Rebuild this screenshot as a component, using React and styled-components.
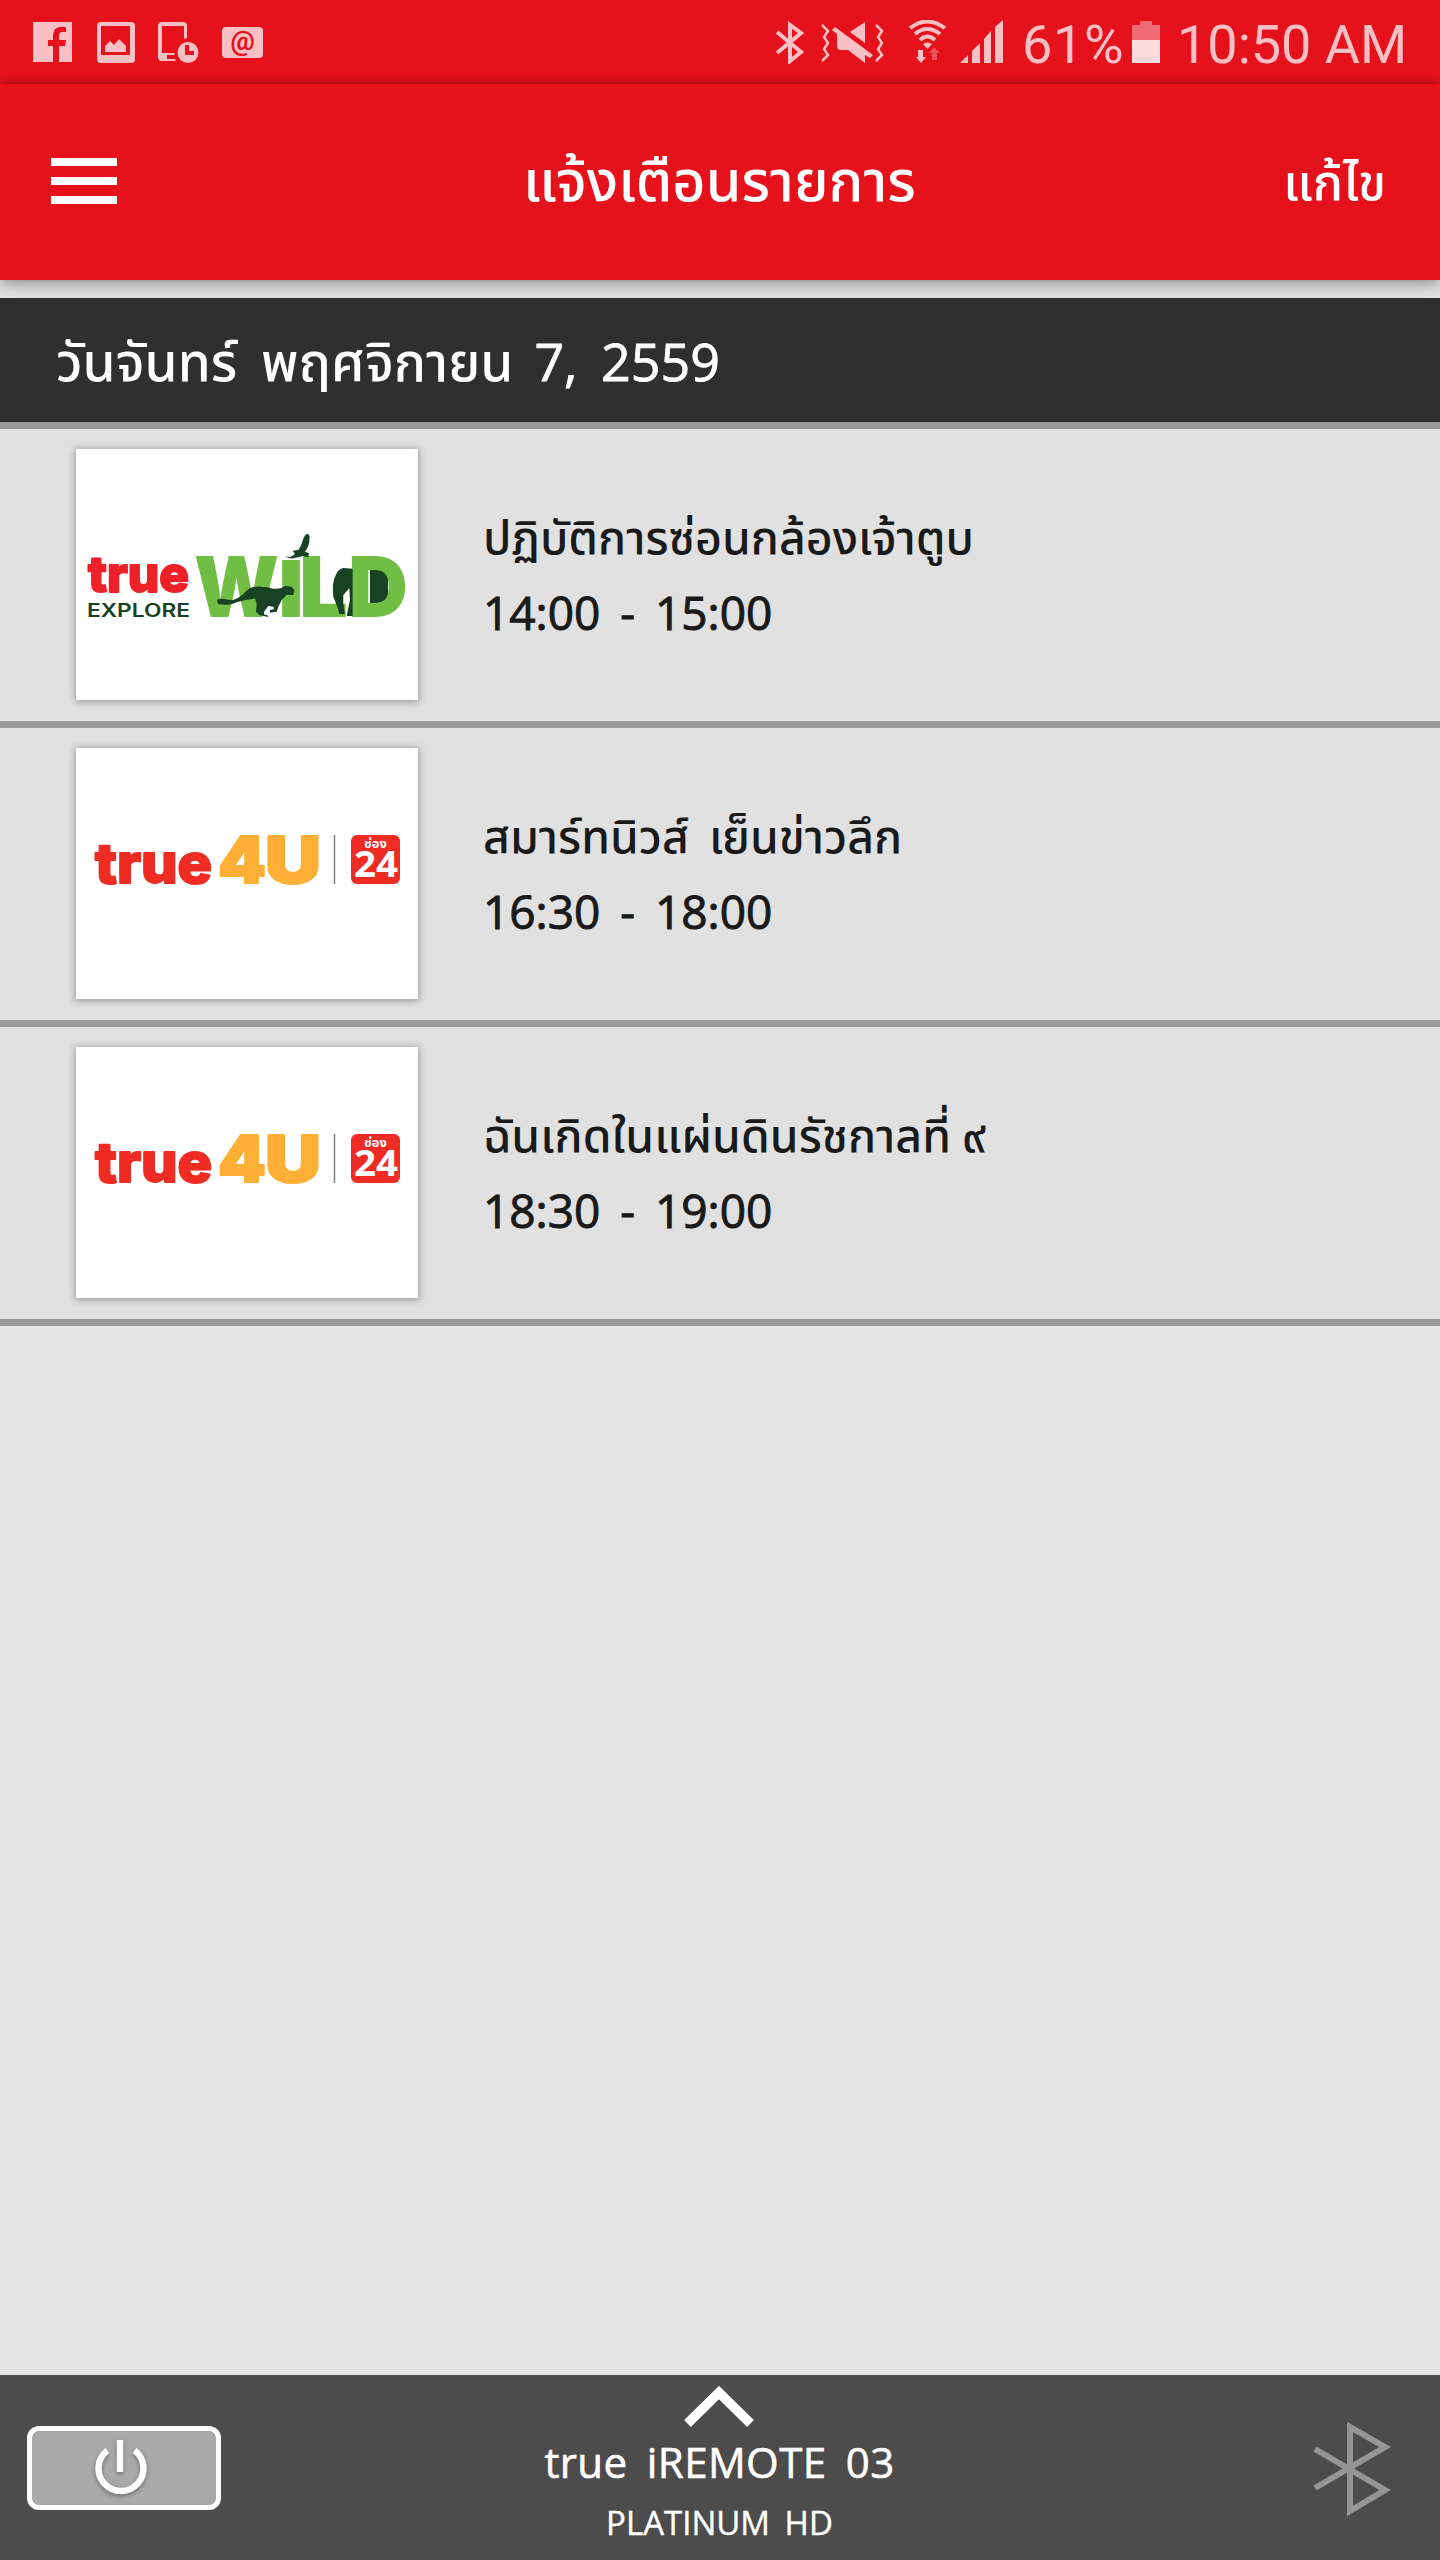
import React from 'react'
import styled, { createGlobalStyle } from 'styled-components'

const GlobalStyle = createGlobalStyle`
  * {
    box-sizing: border-box;
  }
  body {
    margin: 0;
    background-color: #e4e4e4;
    font-family: "Open Sans", "Noto Sans", "Noto Sans Thai", sans-serif;
  }
`

const Screen = styled.div`
  display: flex;
  flex-direction: column;
  width: 1440px;
  height: 2560px;
  overflow: hidden;
  background-color: #e4e4e4;
`

const StatusBar = styled.header`
  display: flex;
  justify-content: space-between;
  height: 84px;
  padding: 20px 37px 0 33px;
  background-color: #e5121c;
  color: #f8c0c4;
  font-family: Roboto, sans-serif;
`

const StatusGroup = styled.div`
  display: flex;
  align-items: flex-start;
  gap: ${props => props.gap || 0}px;
`

const StatusText = styled.span`
  width: ${props => props.width}px;
  margin-left: ${props => props.left}px;
  font-size: 54px;
  line-height: 49px;
  white-space: nowrap;
  letter-spacing: ${props => props.spacing || 0}px;
`

const Toolbar = styled.nav`
  position: relative;
  z-index: 1;
  display: grid;
  grid-template-columns: 1fr auto 1fr;
  align-items: center;
  flex: none;
  height: 196px;
  padding: 0 54px 0 51px;
  background-color: #e5121c;
  color: #fff;
  box-shadow: 0 0 12px rgba(0, 0, 0, .28), 0 6px 16px rgba(0, 0, 0, .2);
`

const MenuButton = styled.div`
  display: flex;
  flex-direction: column;
  gap: 11px;
  width: 66px;
  margin-bottom: 3px;
`

const MenuLine = styled.span`
  height: 8px;
  background-color: #fff;
`

const Title = styled.h1`
  margin: 0 0 6px 2px;
  font-size: 57.5px;
  font-weight: 500;
  line-height: 80px;
  white-space: nowrap;
`

const EditButton = styled.span`
  justify-self: end;
  margin-bottom: 2px;
  font-size: 50px;
  font-weight: 500;
  line-height: 80px;
  white-space: nowrap;
`

const DateBar = styled.div`
  flex: none;
  height: 131px;
  margin-top: 18px;
  padding: 0 56px;
  border-bottom: 7px solid #999;
  background-color: #2f2f2f;
  color: #fff;
  font-size: 53.3px;
  font-weight: 500;
  line-height: 126px;
  word-spacing: 10px;
  white-space: pre;
`

const DateDigits = styled.span`
  margin-left: -3px;
  font-size: 52px;
  -webkit-text-stroke: .8px currentColor;
`

const Row = styled.article`
  display: flex;
  flex: none;
  height: 299px;
  padding: 20px 0 0 76px;
  border-bottom: 7px solid #999;
  background-color: #e1e1e1;
`

const Thumb = styled.div`
  width: 342px;
  height: 251px;
  background-color: #fff;
  box-shadow: 0 1px 7px 1px rgba(0, 0, 0, .32);
`

const Info = styled.div`
  display: flex;
  flex-direction: column;
  padding: 49px 0 0 65px;
  color: #1a1a1a;
  font-weight: 500;
  white-space: nowrap;
`

const ShowTitle = styled.div`
  font-size: 46.4px;
  line-height: 76px;
  word-spacing: ${props => props.gap}px;
`

const ShowTime = styled.div`
  font-size: 46px;
  line-height: 76px;
  word-spacing: 8px;
  -webkit-text-stroke: 1px currentColor;
`

const Footer = styled.footer`
  display: grid;
  grid-template-columns: 1fr auto 1fr;
  height: 185px;
  margin-top: auto;
  padding: 0 28px 0 27px;
  background-color: #4c4c4c;
  color: #fff;
`

const PowerButton = styled.div`
  display: flex;
  justify-content: center;
  width: 194px;
  height: 84px;
  margin-top: 51px;
  padding-right: 6px;
  border: 5px solid #fff;
  border-radius: 12px;
  background-color: #a9a9a9;
`

const PowerIcon = styled.svg`
  filter: drop-shadow(0 2px 2px rgba(0, 0, 0, .35));
`

const Device = styled.div`
  display: flex;
  flex-direction: column;
  align-items: center;
  padding-top: 11px;
`

const DeviceName = styled.div`
  margin-top: 5px;
  font-size: 42px;
  line-height: 60px;
  letter-spacing: .4px;
  word-spacing: 8px;
  white-space: nowrap;
  -webkit-text-stroke: .6px currentColor;
`

const DeviceModel = styled.div`
  margin-top: 3px;
  font-size: 33px;
  line-height: 56px;
  word-spacing: 6px;
  white-space: nowrap;
  -webkit-text-stroke: .4px currentColor;
`

const LinkState = styled.div`
  justify-self: end;
  margin-right: 21px;
  padding-top: 46px;
`

const Notifications = () => (
  <StatusGroup gap={23}>
    <svg width="41" height="44" viewBox="0 0 41 44" fill="currentColor">
      <path d="M0 2h39v40H26V26h6l1-6h-7v-4q0-4 3-4h4V7h-5q-8 0-8 9v4h-5v6h5v16H0z" />
    </svg>
    <svg width="38" height="44" viewBox="0 0 38 44" fill="currentColor">
      <path fillRule="evenodd" d="M4 2h30q4 0 4 4v33q0 4-4 4H4q-4 0-4-4V6q0-4 4-4zM4 6v29h29V6z" />
      <path d="M8 26l5-5 4 4 5-6 7 7v6H8z" />
    </svg>
    <svg width="41" height="44" viewBox="0 0 41 44" fill="currentColor">
      <path d="M4 2h21q4 0 4 4v12l-3 1V6H4v27h13l-1 2h-7v4h8l1 2H4q-4 0-4-4V6q0-4 4-4z" />
      <path fillRule="evenodd" d="M30 22a10.500 10.500 0 1 1 0 21a10.500 10.500 0 0 1 0-21zM27 25v10h9v-4h-5v-6z" />
    </svg>
    <svg width="41" height="44" viewBox="0 0 41 44">
      <rect y="7" width="41" height="31" rx="4" fill="currentColor" />
      <text x="20.500" y="30" textAnchor="middle" fontSize="27" fontWeight="700" fill="#e5121c">@</text>
    </svg>
  </StatusGroup>
)

const SystemIcons = () => (
  <StatusGroup>
    <svg width="227" height="44" viewBox="777 20 227 44" fill="currentColor">
      <path d="M778 32l24 20-11 9V25l11 8-24 20" fill="none" stroke="currentColor" strokeWidth="4" />
      <path d="M823 25l6 6-4 6 4 6-4 6 4 6-6 6M877 25l6 6-4 6 4 6-4 6 4 6-6 6" fill="none" stroke="currentColor" strokeWidth="2.500" />
      <path d="M833 30l3-3 38 28-3 3-5-3v8l-17-13h-8q-3-1-3-4V34zM866 22v21l-15-11z" />
      <g fill="none" stroke="currentColor" strokeWidth="4">
        <path d="M911 28q17-13 35 0" />
        <path d="M916 34q12-10 25 0" />
        <path d="M921 40q7-7 15 0" />
      </g>
      <path d="M924 44q4-3 9 0l-4.500 5z" />
      <path d="M919 50h5v7h3l-5 6-5-6h2z" />
      <path d="M933 60v-7h-3l5-6 6 6h-3v7z" opacity=".35" />
      <path d="M961 63l8-8v8zM973 63V51l8-8v20zM985 63V39l7-8v32zM996 63V27l8-7v43z" />
    </svg>
    <StatusText left={19} width={110} spacing={.6}>61%</StatusText>
    <svg width="28" height="43" viewBox="0 0 28 43">
      <path d="M8 1h12v4h8v15H0V5h8z" fill="#f06d75" />
      <path d="M0 20h28v23H0z" fill="#fbdadc" />
    </svg>
    <StatusText left={17} width={226}>10:50 AM</StatusText>
  </StatusGroup>
)

const TrueWild = () => (
  <svg width="342" height="251" viewBox="0 0 342 251">
    <g fontFamily="Inter, sans-serif" fontWeight="800">
      <text x="12" y="143" fontSize="50" textLength="101" lengthAdjust="spacingAndGlyphs" fill="#ee2128" stroke="#ee2128" strokeWidth="2" strokeLinejoin="round">true</text>
      <text x="11" y="167.500" fontSize="18" fontWeight="600" textLength="103" lengthAdjust="spacingAndGlyphs" fill="#174224">EXPLORE</text>
    </g>
    <path d="M294 119h18v37h-18z" fill="#174224" />
    <g fontFamily="Inter, sans-serif" fontWeight="900" fontSize="84" fill="#70be44">
      <text x="118" y="168" textLength="85" lengthAdjust="spacingAndGlyphs">W</text>
      <text x="202" y="168" fontSize="79" textLength="26" lengthAdjust="spacingAndGlyphs">I</text>
      <text x="223" y="168" textLength="49" lengthAdjust="spacingAndGlyphs">L</text>
      <text x="272" y="168" textLength="60" lengthAdjust="spacingAndGlyphs">D</text>
    </g>
    {/* eagle, cheetah, elephant */}
    <g fill="#174224" transform="translate(-16 -19) scale(.3333)">
      <path d="M675 378l15 4 15-10-7-10 17-2q8-10 12-25 4-16 13-23 8-2 9 8 0 16-4 27-4 10-10 18l12 5-2 12-15-4-30 7q-14 2-25-7z" />
      <path d="M470 510q10-6 22-3 14 3 28 3 16-6 30-18 8-12 22-19 14-4 30-3 20 0 38 6 14 1 25-2l10-7 20 3 8 10-3 15-20-1-15 16q-4 10-10 20l-5 15-20 3v-8l12-2-2-8-15-2-13 17 0 8 13 4v4l-25-5-12-10 2-25-5-16q-14 5-25 4-16 3-30 8-16 8-30 7-16 0-25-2z" />
      <path d="M878 416l-28-2q-14 4-20 16-10 18-11 35-1 20 1 35l12 30 6 22 17 1-5-33v-25l18-20 2 35-10 48h18z" />
    </g>
  </svg>
)

const True4U = () => (
  <svg width="342" height="251" viewBox="0 0 342 251">
    <g fontFamily="Inter, sans-serif" fontWeight="800">
      <text x="19" y="135" fontSize="55" textLength="117" lengthAdjust="spacingAndGlyphs" fill="#ef2c24" stroke="#ef2c24" strokeWidth="2" strokeLinejoin="round">true</text>
      <g fontWeight="900" fontSize="65" fill="#fdb035" stroke="#fdb035" strokeWidth="2" strokeLinejoin="round">
        <text x="142" y="135" textLength="48" lengthAdjust="spacingAndGlyphs">4</text>
        <text x="189" y="135" textLength="56" lengthAdjust="spacingAndGlyphs">U</text>
      </g>
    </g>
    <path d="M258.500 87v49" stroke="#808080" strokeWidth="1.500" />
    <rect x="275" y="87" width="49" height="49" rx="6" fill="#ef2c24" />
    <text x="299.500" y="100" textAnchor="middle" fontSize="13" fontWeight="700" fill="#fff">ช่อง</text>
    <text x="278" y="129" fontFamily="Open Sans, sans-serif" fontSize="35" fontWeight="700" textLength="44" lengthAdjust="spacingAndGlyphs" fill="#fff">24</text>
  </svg>
)

const programs = [
  { title: 'ปฏิบัติการซ่อนกล้องเจ้าตูบ', time: '14:00 - 15:00', gap: 0, Logo: TrueWild },
  { title: 'สมาร์ทนิวส์ เย็นข่าวลึก', time: '16:30 - 18:00', gap: 8, Logo: True4U },
  { title: 'ฉันเกิดในแผ่นดินรัชกาลที่ ๙', time: '18:30 - 19:00', gap: -1, Logo: True4U },
]

const App = () => (
  <Screen>
    <GlobalStyle />
    <StatusBar>
      <Notifications />
      <SystemIcons />
    </StatusBar>
    <Toolbar>
      <MenuButton>
        <MenuLine />
        <MenuLine />
        <MenuLine />
      </MenuButton>
      <Title>แจ้งเตือนรายการ</Title>
      <EditButton>แก้ไข</EditButton>
    </Toolbar>
    <DateBar>
      วันจันทร์ พฤศจิกายน <DateDigits>7, 2559</DateDigits>
    </DateBar>
    {programs.map(({ title, time, gap, Logo }) => (
      <Row key={time}>
        <Thumb>
          <Logo />
        </Thumb>
        <Info>
          <ShowTitle gap={gap}>{title}</ShowTitle>
          <ShowTime>{time}</ShowTime>
        </Info>
      </Row>
    ))}
    <Footer>
      <PowerButton>
        <PowerIcon width="60" height="74" viewBox="0 0 60 74" fill="none" stroke="#fff" strokeWidth="6.500">
          <path d="M16.500 19.500a22.500 22.500 0 1 0 27 0M29 9v32" />
        </PowerIcon>
      </PowerButton>
      <Device>
        <svg width="70" height="41" viewBox="0 0 70 41" fill="none" stroke="#fff" strokeWidth="9.500">
          <path d="M3.500 37.500L35 6.500l31.500 31" />
        </svg>
        <DeviceName>true iREMOTE 03</DeviceName>
        <DeviceModel>PLATINUM HD</DeviceModel>
      </Device>
      <LinkState>
        <svg width="78" height="96" viewBox="0 0 78 96" fill="none" stroke="#959595" strokeWidth="6">
          <path d="M2 28l70 41-35 21V6l35 20L2 67" />
        </svg>
      </LinkState>
    </Footer>
  </Screen>
)

export default App
